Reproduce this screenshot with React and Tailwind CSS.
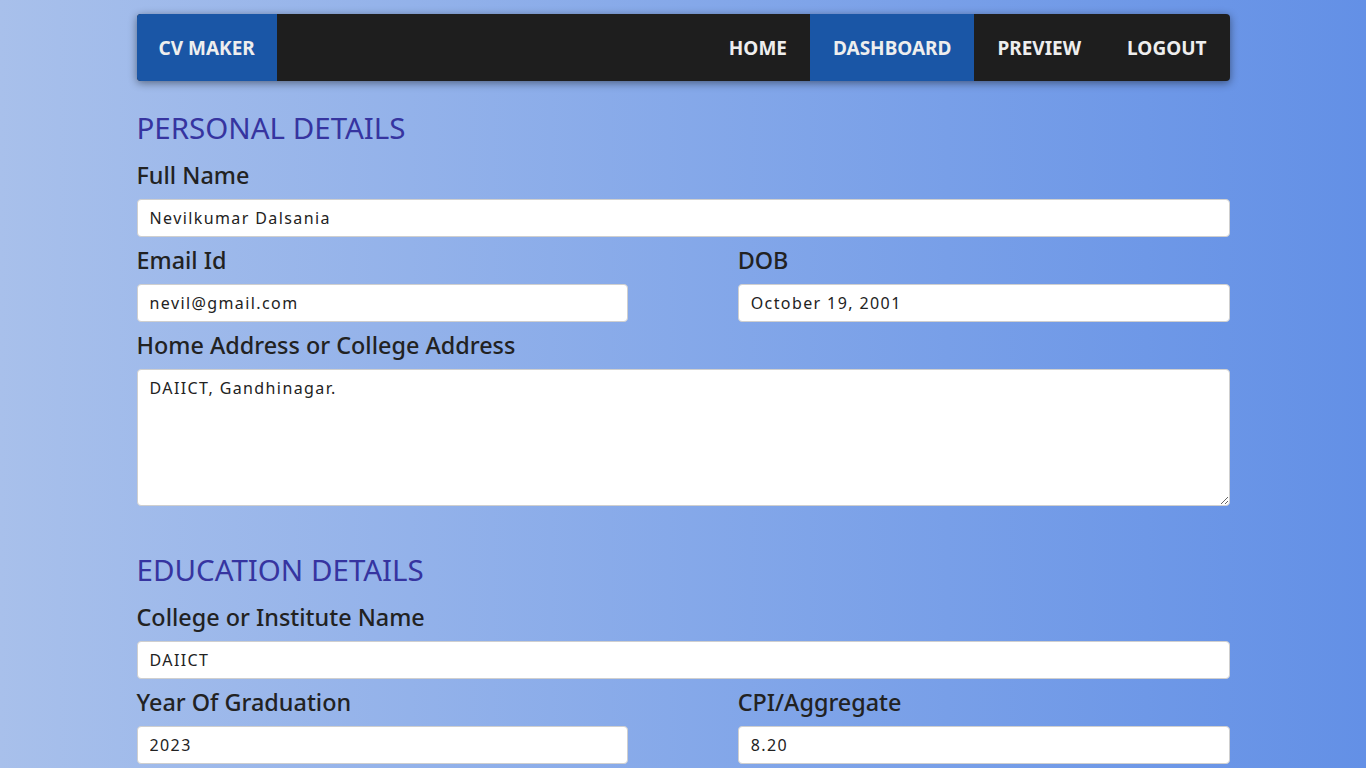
import React from "react";

const navLinks = [
  { label: "HOME", active: false },
  { label: "DASHBOARD", active: true },
  { label: "PREVIEW", active: false },
  { label: "LOGOUT", active: false },
];

const inputCls =
  "w-full h-[38px] px-3 bg-white rounded-[4px] border border-[#cfcfcf] text-[16px] tracking-[1.4px] text-[#222] outline-none";

const Label = ({ children }) => (
  <label className="block h-[31px] leading-[31px] mb-2 text-[23.4px] font-medium text-[#222]">
    {children}
  </label>
);

const Field = ({ label, value }) => (
  <div className="mb-2">
    <Label>{label}</Label>
    <input type="text" defaultValue={value} className={inputCls} />
  </div>
);

const Heading = ({ children }) => (
  <h2 className="h-[40px] leading-[40px] mb-3 text-[29.5px] text-[#3634a0]">
    {children}
  </h2>
);

export default function App() {
  return (
    <div
      className="min-h-screen bg-gradient-to-r from-[#a8c0eb] to-[#6390e6] pt-[14px] pb-10"
      style={{ fontFamily: '"Noto Sans", sans-serif' }}
    >
      <div className="w-[1093px] mx-auto">
        {/* Navbar */}
        <nav className="flex items-stretch h-[67px] bg-[#1e1e1e] rounded-[4px] shadow-[0_2px_8px_rgba(0,0,0,0.45)] overflow-hidden">
          <a className="flex items-center pt-[2px] px-[22px] bg-[#1a56a6] text-[#eee] text-[19px] font-bold">
            CV MAKER
          </a>
          <div className="flex-1" />
          {navLinks.map((l) => (
            <a
              key={l.label}
              className={`flex items-center pt-[2px] px-[23px] text-[#eee] text-[19px] font-bold ${l.active ? "bg-[#1a56a6]" : ""}`}
            >
              {l.label}
            </a>
          ))}
        </nav>

        {/* Personal */}
        <section className="mt-[27px]">
          <Heading>PERSONAL DETAILS</Heading>
          <Field label="Full Name" value="Nevilkumar Dalsania" />
          <div className="flex justify-between">
            <div className="w-[45%]">
              <Field label="Email Id" value="nevil@gmail.com" />
            </div>
            <div className="w-[45%]">
              <Field label="DOB" value="October 19, 2001" />
            </div>
          </div>
          <div>
            <Label>Home Address or College Address</Label>
            <textarea
              defaultValue="DAIICT, Gandhinagar."
              className="block w-full h-[137px] px-3 py-[6px] bg-white rounded-[4px] border border-[#cfcfcf] text-[16px] tracking-[1.4px] text-[#222] outline-none"
            />
          </div>
        </section>

        {/* Education */}
        <section className="mt-[44px]">
          <Heading>EDUCATION DETAILS</Heading>
          <Field label="College or Institute Name" value="DAIICT" />
          <div className="flex justify-between">
            <div className="w-[45%]">
              <Field label="Year Of Graduation" value="2023" />
            </div>
            <div className="w-[45%]">
              <Field label="CPI/Aggregate" value="8.20" />
            </div>
          </div>
        </section>
      </div>
    </div>
  );
}
